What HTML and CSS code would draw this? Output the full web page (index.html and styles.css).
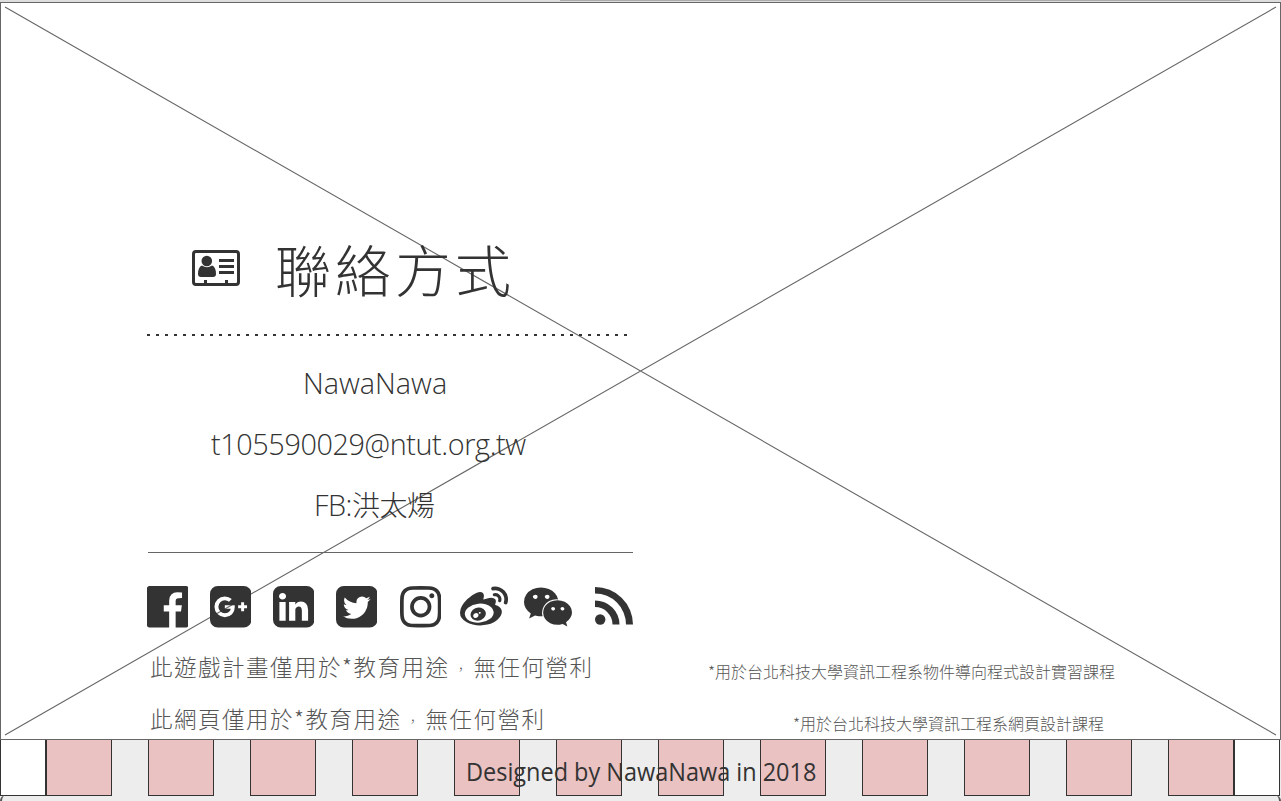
FILE: index.html
```
<!DOCTYPE html>
<html lang="zh-Hant">
<head>
<meta charset="utf-8">
<title>聯絡方式</title>
<link rel="stylesheet" href="styles.css">
</head>
<body>
<div class="page">
  <div class="topbar"><div class="topbar-line"></div></div>
  <main class="panel">
    <svg class="cross" viewBox="0 0 1281 738" aria-hidden="true"><path d="M5 5 1276 733M1276 5 5 733"/></svg>
    <section class="contact">
      <header class="heading">
        <svg class="card-icon" viewBox="0 0 48 36" aria-hidden="true">
          <path fill-rule="evenodd" d="M4 0H44Q48 0 48 4V32Q48 36 44 36H4Q0 36 0 32V4Q0 0 4 0ZM4 3Q3 3 3 4V32Q3 33 4 33H12V30H15V33H33V30H36V33H44Q45 33 45 32V4Q45 3 44 3Z"/>
          <circle cx="14.800" cy="11" r="5.300"/>
          <path d="M10 15.500Q15 19 20 15.500Q24 17 24 24Q24 27 21 27H9Q6 27 6 24Q6 17 10 15.500ZM27 9H42V12H27ZM27 15H42V18H27ZM27 21H42V24H27Z"/>
        </svg>
        <h1><span>聯絡方式</span></h1>
      </header>
      <div class="dots"></div>
      <div class="details">
        <p class="name"><span>NawaNawa</span></p>
        <p class="mail"><span>t105590029@ntut.org.tw</span></p>
        <p class="fb"><span>FB:</span><span class="han">洪太煬</span></p>
      </div>
      <div class="social">
        <svg class="sq" viewBox="128 128 1536 1536"><path d="M1579 128q35 0 60 25t25 60v1366q0 35-25 60t-60 25h-391v-595h199l30-232h-229v-148q0-56 23.500-84t91.500-28l122-1v-207q-63-9-178-9-136 0-217.500 80t-81.500 226v171h-200v232h200v595h-735q-35 0-60-25t-25-60v-1366q0-35 25-60t60-25h1366z"/></svg>
        <svg class="sq" viewBox="128 128 1536 1536"><path d="M1045 905q0-26-6-64h-362v132h217q-3 24-16.500 50t-37.500 53-66.500 44.500-96.500 17.500q-99 0-169-71t-70-171 70-171 169-71q92 0 153 59l104-101q-108-100-257-100-160 0-272 112.500t-112 271.500 112 271.500 272 112.500q165 0 266.500-105t101.500-270zm345 46h109v-110h-109v-110h-110v110h-110v110h110v110h110v-110zm274-535v960q0 119-84.500 203.500t-203.500 84.500h-960q-119 0-203.500-84.500t-84.500-203.500v-960q0-119 84.500-203.500t203.500-84.500h960q119 0 203.500 84.500t84.500 203.500z"/></svg>
        <svg class="sq" viewBox="128 128 1536 1536"><path d="M365 1414h231v-694h-231v694zm246-908q-1-52-36-86t-93-34-94.500 34-36.500 86q0 51 35.500 85.500t92.500 34.500h1q59 0 95-34.500t36-85.500zm585 908h231v-398q0-154-73-233t-193-79q-136 0-209 117h2v-101h-231q3 66 0 694h231v-388q0-38 7-56 15-35 45-59.500t74-24.500q116 0 116 157v371zm468-998v960q0 119-84.500 203.500t-203.500 84.500h-960q-119 0-203.500-84.500t-84.500-203.500v-960q0-119 84.500-203.500t203.500-84.500h960q119 0 203.500 84.500t84.500 203.500z"/></svg>
        <svg class="sq" viewBox="128 128 1536 1536"><path d="M1408 610q-56 25-121 34 68-40 93-117-65 38-134 51-61-66-153-66-87 0-148.500 61.500t-61.500 148.500q0 29 5 48-129-7-242-65t-192-155q-29 50-29 106 0 114 91 175-47-1-100-26v2q0 75 50 133.500t123 72.500q-29 8-51 8-13 0-39-4 21 63 74.500 104t121.500 42q-116 90-261 90-26 0-50-3 148 94 322 94 112 0 210-35.500t168-95 120.500-137 75-162 24.500-168.500q0-18-1-27 63-45 105-109zm256-194v960q0 119-84.500 203.500t-203.500 84.500h-960q-119 0-203.500-84.500t-84.500-203.500v-960q0-119 84.500-203.500t203.500-84.500h960q119 0 203.500 84.500t84.500 203.500z"/></svg>
        <svg class="sq insta" viewBox="128 128 1536 1536"><path d="M1152 896q0-106-75-181t-181-75-181 75-75 181 75 181 181 75 181-75 75-181zm138 0q0 164-115 279t-279 115-279-115-115-279 115-279 279-115 279 115 115 279zm108-410q0 38-27 65t-65 27-65-27-27-65 27-65 65-27 65 27 27 65zm-502-220q-7 0-76.500-.5t-105.500 0-96.500 3-103 10-71.500 18.500q-50 20-88 58t-58 88q-11 29-18.500 71.500t-10 103-3 96.500 0 105.500 .5 76.500-.5 76.500 0 105.500 3 96.500 10 103 18.500 71.500q20 50 58 88t88 58q29 11 71.500 18.500t103 10 96.500 3 105.500 0 76.500-.5 76.500 .5 105.500 0 96.500-3 103-10 71.500-18.500q50-20 88-58t58-88q11-29 18.500-71.500t10-103 3-96.500 0-105.500-.5-76.500 .5-76.500 0-105.500-3-96.500-10-103-18.500-71.500q-20-50-58-88t-88-58q-29-11-71.500-18.500t-103-10-96.500-3-105.500 0-76.500 .5zm768 630q0 229-5 317-10 208-124 322t-322 124q-88 5-317 5t-317-5q-208-10-322-124t-124-322q-5-88-5-317t5-317q10-208 124-322t322-124q88-5 317-5t317 5q208 10 322 124t124 322q5 88 5 317z"/></svg>
        <svg class="weibo" viewBox="0 0 1792 1792"><path d="M675 1284q21-34 11-69t-45-50q-34-14-73 1t-60 49q-22 34-13 68.500t43 50.500 74.500 1 62.500-51zm94-121q8-13 3.500-26.500t-17.500-18.500q-14-5-28.500 .5t-21.500 18.500q-17 31 13 45 14 5 29-.5t22-18.500zm174 107q-45 102-158 150t-224 12q-107-34-147.500-126.500t6.500-187.500q47-93 151.500-139t210.500-19q111 29 158.500 119.500t2.500 190.500zm312-160q-9-96-89-170t-208.500-109-274.500-21q-223 23-369.500 141.500t-132.500 264.500q9 96 89 170t208.500 109 274.500 21q223-23 369.500-141.500t132.500-264.500zm308 4q0 68-37 139.500t-109 137-168.500 117.500-226 83-270.500 31-275-33.500-240.500-93-171.500-151-65-199.500q0-115 69.500-245t197.500-258q169-169 341.500-236t246.500 7q65 64 20 209-4 14-1 20t10 7 14.500-.5 13.500-3.500l6-2q139-59 246-59t153 61q45 63 0 178-2 13-4.500 20t4.500 12.500 12 7.500 17 6q57 18 103 47t80 81.500 34 116.500zm-74-624q42 47 54.500 108.500t-6.500 117.500q-8 23-29.500 34t-44.500 4q-23-8-34-29.500t-4-44.500q20-63-24-111t-107-35q-24 5-45-8t-25-37q-5-24 8-44.500t37-25.500q60-13 119 5.500t101 65.500zm181-163q87 96 112.500 222.500t-13.500 241.500q-9 27-34 40t-52 4-40-34-5-52q28-82 10-172t-80-158q-62-69-148-95.500t-173-8.500q-28 6-52-9.500t-30-43.500 9.500-51.500 43.500-29.500q123-26 244 11.500t208 134.500z"/></svg>
        <svg class="wechat" viewBox="0 0 2048 1792"><path d="M580 461q0-41-25-66t-66-25q-43 0-76 25.500t-33 65.500q0 39 33 64.500t76 25.500q41 0 66-24.500t25-65.500zm743 507q0-28-25.500-50t-65.500-22q-27 0-49.500 22.500t-22.500 49.500q0 28 22.500 50.500t49.500 22.500q40 0 65.500-22t25.500-51zm-236-507q0-41-24.500-66t-65.500-25q-43 0-76 25.500t-33 65.500q0 39 33 64.500t76 25.500q41 0 65.500-24.500t24.500-65.500zm635 507q0-28-26-50t-65-22q-27 0-49.500 22.500t-22.500 49.500q0 28 22.500 50.500t49.500 22.500q39 0 65-22t26-51zm-266-397q-31-4-70-4-169 0-311 77t-223.500 208.500-81.500 287.500q0 78 23 152-35 3-68 3-26 0-50-1.500t-55-6.500-44.500-7-54.500-10.500-50-10.500l-253 127 72-218q-290-203-290-490 0-169 97.500-311t264-223.500 363.500-81.500q176 0 332.500 66t262 182.500 136.500 260.500zm592 561q0 117-68.500 223.500t-185.500 193.500l55 181-199-109q-150 37-218 37-169 0-311-70.500t-223.500-191.500-81.500-264 81.500-264 223.500-191.500 311-70.500q161 0 303 70.500t227.500 192 85.500 263.500z"/></svg>
        <svg class="rss" viewBox="0 0 38 38"><circle cx="5.200" cy="32.500" r="5.200"/><path d="M0 13.500A24.500 24 0 0 1 24.500 37.500H17.500A17.500 17.500 0 0 0 0 20ZM0 0A38 37.500 0 0 1 38 37.500H31A31 31 0 0 0 0 6.500Z"/></svg>
      </div>
    </section>
    <section class="notes">
      <div class="note"><p class="claim c1">此遊戲計畫僅用於*教育用途<span class="comma">，</span>無任何營利</p><p class="source">*用於台北科技大學資訊工程系物件導向程式設計實習課程</p></div>
      <div class="note second"><p class="claim c2">此網頁僅用於*教育用途<span class="comma">，</span>無任何營利</p><p class="source">*用於台北科技大學資訊工程系網頁設計課程</p></div>
    </section>
  </main>
  <footer class="footer">
    <div class="tiles">
      <i class="edge"></i>
      <div class="pinks"><i></i><i></i><i></i><i></i><i></i><i></i><i></i><i></i><i></i><i></i><i></i><i></i></div>
      <i class="edge"></i>
    </div>
    <p class="credit"><span>Designed by NawaNawa in 2018</span></p>
    <div class="next-panel"></div>
  </footer>
</div>
</body>
</html>
```
FILE: styles.css
```
* { box-sizing: border-box; }
body { margin: 0; background: #ededed; color: #333; font-family: "Open Sans", "Noto Sans CJK TC", sans-serif; font-weight: 300; }
h1, p { margin: 0; font-weight: 300; white-space: nowrap; }
svg { display: block; fill: #333; flex: none; }
.page { width: 1281px; height: 801px; overflow: hidden; display: flex; flex-direction: column; }
.topbar { height: 2px; flex: none; background: #ddd; }
.topbar-line { height: 1px; width: 680px; margin-left: 560px; background: #aaa; }
.panel { position: relative; height: 738px; flex: none; background: #fff; border: 1px solid #666; }
.cross { position: absolute; left: -1px; top: -1px; width: 1281px; height: 738px; fill: none; stroke: #666; stroke-width: 1.1; }
.contact, .notes { position: relative; }
.contact { width: 487px; margin-left: 145px; padding-top: 232px; }
.heading { display: flex; align-items: center; height: 66px; padding-left: 46px; }
.card-icon { width: 48px; height: 36px; }
h1 { font-family: "Noto Sans CJK TC", sans-serif; font-size: 56px; line-height: 66px; letter-spacing: 4px; margin-left: 35px; font-weight: 200; }
.dots { height: 2px; margin: 33px 0 0 1px; width: 481px; background: repeating-linear-gradient(90deg, #333 0 3px, transparent 3px 9px); }
.details { margin: 16px 0 0 2px; height: 201px; border-bottom: 1px solid #666; font-size: 28.800px; line-height: 62px; }
.details p { height: 61px; width: 454px; }
.name { padding-left: 155px; }
.mail { padding-left: 63px; letter-spacing: -0.400px; }
.fb { padding-left: 166px; }
.fb { line-height: 60px; letter-spacing: -0.500px; }
.han { font-family: "Noto Sans CJK TC", sans-serif; font-size: 28px; }
.social { display: flex; margin-top: 33px; height: 42px; }
.sq { width: 41.500px; height: 41.500px; margin-right: 21.500px; position: relative; left: 0.500px; }
.insta { margin: 0 19.500px 0 1px; }
.weibo { width: 48px; height: 48px; margin-top: -4px; }
.wechat { width: 48px; height: 42px; margin: 0 23px 0 16px; }
.rss { width: 38px; height: 38px; margin-top: 1px; }
.notes { margin: 14px 0 0 149px; width: 970px; font-family: "Noto Sans CJK TC", sans-serif; }
.note { display: flex; justify-content: space-between; height: 52px; line-height: 48px; color: #555; font-weight: 200; }
.note p { font-weight: 200; }
.claim { font-size: 22.500px; letter-spacing: 1.500px; }
.comma { display: inline-block; width: 24px; font-size: 13px; text-align: center; vertical-align: 2px; line-height: 1; }
.source { font-size: 16px; padding: 5px 5px 0 0; }
.second .source { padding-right: 16px; }
.footer { position: relative; height: 61px; flex: none; overflow: hidden; }
.tiles { display: flex; height: 56px; width: 1280px; }
.tiles i { border: 1px solid #333; border-top: 0; }
.edge { width: 46px; background: #fff; }
.pinks { display: flex; gap: 36px; }
.pinks i { width: 66px; background: #ebc2c2; }
.credit { position: absolute; left: 466px; top: 14px; font-size: 25.600px; line-height: 36px; font-weight: 400; transform: scaleX(0.917); transform-origin: left; }
.next-panel { position: absolute; left: 0; top: 55px; width: 1281px; height: 20px; border: 2px solid #555; border-width: 0 2px; border-radius: 6px; }
```
